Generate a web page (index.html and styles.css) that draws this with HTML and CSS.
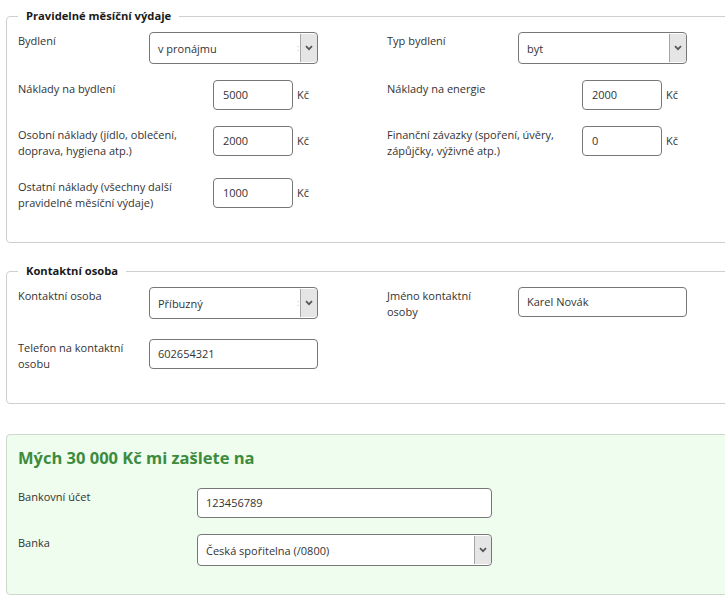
FILE: index.html
```html
<!DOCTYPE html>
<html lang="cs">
<head>
<meta charset="utf-8">
<title>Formulář</title>
<link rel="stylesheet" href="styles.css">
</head>
<body>
<div class="page">
  <fieldset class="group">
    <legend>Pravidelné měsíční výdaje</legend>
    <div class="grid">
      <div class="field">
        <div class="label">Bydlení</div>
        <div class="control">
          <div class="select"><span class="value">v pronájmu</span><span class="dots">:</span><span class="arrow"><svg width="8" height="6" viewBox="0 0 8 6"><path d="M1 1.2 L4 4.2 L7 1.2" fill="none" stroke="#555" stroke-width="1.7"/></svg></span></div>
        </div>
      </div>
      <div class="field">
        <div class="label">Typ bydlení</div>
        <div class="control">
          <div class="select"><span class="value">byt</span><span class="arrow"><svg width="8" height="6" viewBox="0 0 8 6"><path d="M1 1.2 L4 4.2 L7 1.2" fill="none" stroke="#555" stroke-width="1.7"/></svg></span></div>
        </div>
      </div>
      <div class="field">
        <div class="label">Náklady na bydlení</div>
        <div class="control num"><div class="input short">5000</div><span class="unit">Kč</span></div>
      </div>
      <div class="field">
        <div class="label">Náklady na energie</div>
        <div class="control num"><div class="input short">2000</div><span class="unit">Kč</span></div>
      </div>
      <div class="field">
        <div class="label">Osobní náklady (jídlo, oblečení, doprava, hygiena atp.)</div>
        <div class="control num"><div class="input short">2000</div><span class="unit">Kč</span></div>
      </div>
      <div class="field">
        <div class="label">Finanční závazky (spoření, úvěry, zápůjčky, výživné atp.)</div>
        <div class="control num"><div class="input short">0</div><span class="unit">Kč</span></div>
      </div>
      <div class="field">
        <div class="label">Ostatní náklady (všechny další pravidelné měsíční výdaje)</div>
        <div class="control num"><div class="input short">1000</div><span class="unit">Kč</span></div>
      </div>
    </div>
  </fieldset>

  <fieldset class="group">
    <legend>Kontaktní osoba</legend>
    <div class="grid">
      <div class="field">
        <div class="label">Kontaktní osoba</div>
        <div class="control">
          <div class="select"><span class="value">Příbuzný</span><span class="dots">:</span><span class="arrow"><svg width="8" height="6" viewBox="0 0 8 6"><path d="M1 1.2 L4 4.2 L7 1.2" fill="none" stroke="#555" stroke-width="1.7"/></svg></span></div>
        </div>
      </div>
      <div class="field">
        <div class="label">Jméno kontaktní osoby</div>
        <div class="control"><div class="input">Karel Novák</div></div>
      </div>
      <div class="field">
        <div class="label">Telefon na kontaktní osobu</div>
        <div class="control"><div class="input">602654321</div></div>
      </div>
    </div>
  </fieldset>

  <section class="payout">
    <h2>Mých 30 000 Kč mi zašlete na</h2>
    <div class="prow">
      <div class="plabel">Bankovní účet</div>
      <div class="input wide">123456789</div>
    </div>
    <div class="prow">
      <div class="plabel">Banka</div>
      <div class="select wide"><span class="value">Česká spořitelna (/0800)</span><span class="arrow"><svg width="8" height="6" viewBox="0 0 8 6"><path d="M1 1.2 L4 4.2 L7 1.2" fill="none" stroke="#555" stroke-width="1.7"/></svg></span></div>
    </div>
  </section>
</div>
</body>
</html>
```

FILE: styles.css
```css
html, body {
  margin: 0;
  padding: 0;
  overflow: hidden;
  background: #fff;
}
body {
  font-family: "Open Sans", "Liberation Sans", sans-serif;
  font-size: 11px;
  color: #333;
}
.page {
  width: 760px;
  padding: 8px 0 0 6px;
}
.group {
  margin: 0 0 20px 0;
  padding: 8px 11px 28px 11px;
  border: 1px solid #cfcfcf;
  border-radius: 4px;
  min-width: 0;
}
.group legend {
  padding: 0 8px;
  font-weight: bold;
  font-size: 11.2px;
  line-height: 16px;
  color: #1a1a1a;
}
.grid {
  display: grid;
  grid-template-columns: 369px 369px;
  row-gap: 16px;
  align-items: start;
}
.field {
  width: 300px;
  display: flex;
  align-items: flex-start;
}
.label {
  flex: 1;
  min-width: 131px;
  padding: 1px 20px 3px 0;
  box-sizing: border-box;
  line-height: 16px;
  color: #333;
}
.control {
  flex: none;
  display: flex;
}
.unit {
  width: 21px;
  margin-left: 4px;
  line-height: 30px;
  color: #333;
}
.input {
  box-sizing: border-box;
  width: 169px;
  height: 30px;
  border: 1px solid #777;
  border-radius: 4px;
  padding: 0 8px;
  line-height: 28px;
  background: #fff;
  color: #333;
  white-space: nowrap;
}
.input.short {
  width: 80px;
  padding-left: 9px;
}
.select {
  box-sizing: border-box;
  width: 169px;
  height: 32px;
  border: 1px solid #777;
  border-radius: 4px;
  background: #fff;
  display: flex;
  align-items: stretch;
  overflow: hidden;
}
.select .value {
  flex: 1;
  padding: 2px 8px 0;
  line-height: 28px;
  white-space: nowrap;
  color: #333;
}
.select .dots {
  width: 3px;
  line-height: 28px;
  padding-top: 1px;
  font-size: 9px;
  color: #bbb;
}
.select .arrow {
  width: 16px;
  flex: none;
  margin: 1px 0;
  border-left: 1px solid #a5a5a5;
  background: #e5e5e5;
  border-radius: 0 2px 2px 0;
  display: flex;
  align-items: center;
  justify-content: center;
}
.payout {
  margin-top: 30px;
  box-sizing: border-box;
  width: 760px;
  background: #eefded;
  border: 1px solid #cfd8cc;
  border-radius: 4px;
  padding: 11px 11px 28px;
}
.payout h2 {
  margin: 0 0 18px;
  font-size: 16.5px;
  line-height: 24px;
  font-weight: bold;
  color: #3d8b3d;
}
.prow {
  display: flex;
  align-items: flex-start;
  margin-bottom: 16px;
}
.prow:last-child {
  margin-bottom: 0;
}
.plabel {
  width: 179px;
  flex: none;
  padding-top: 1px;
  line-height: 16px;
  color: #333;
}
.input.wide, .select.wide {
  width: 295px;
}
```
